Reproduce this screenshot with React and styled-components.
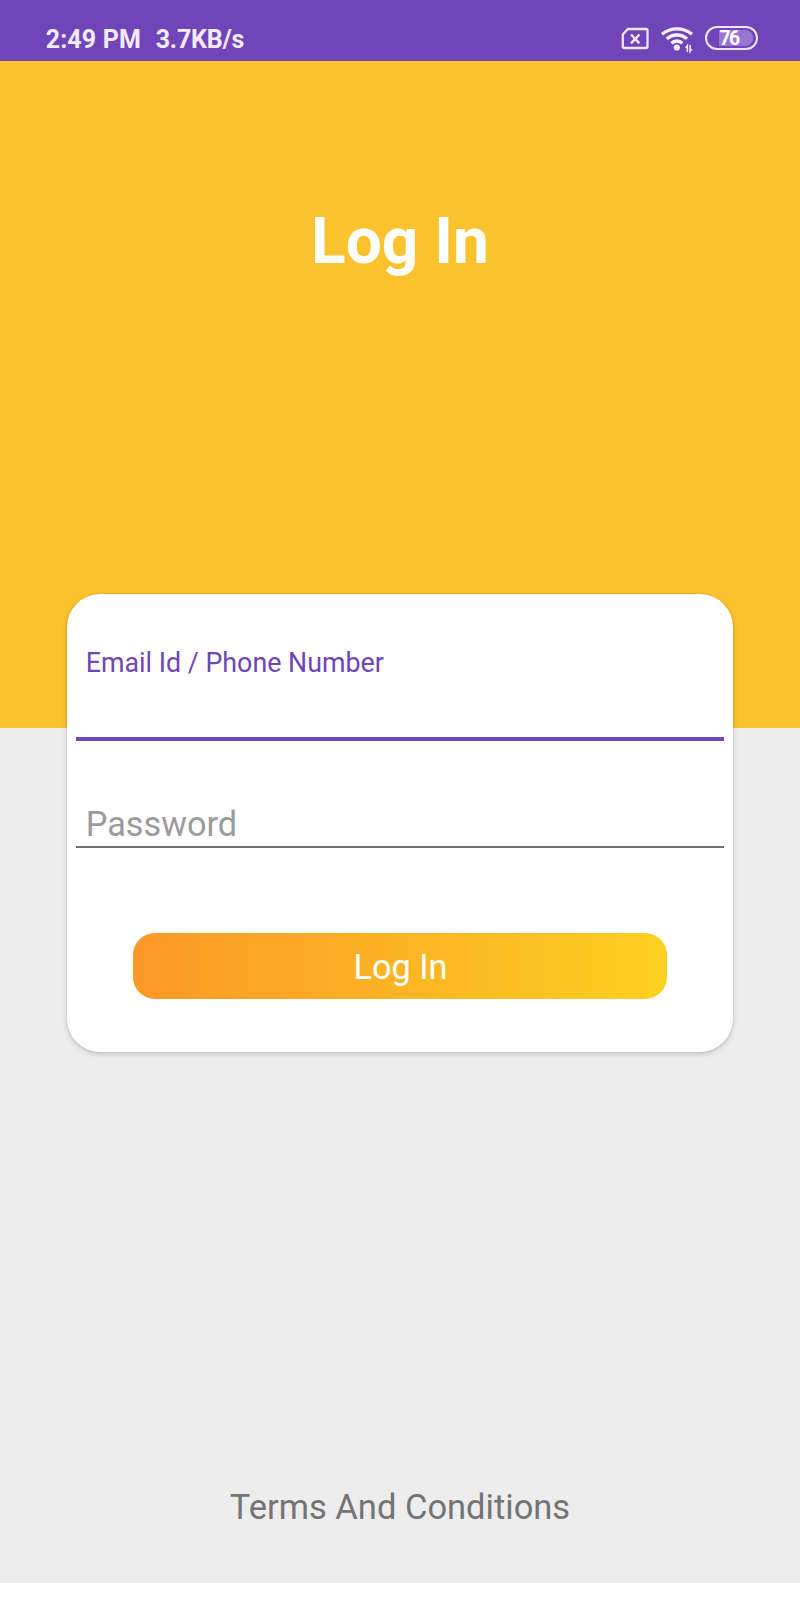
import React from "react";
import styled, { createGlobalStyle } from "styled-components";

const GlobalStyle = createGlobalStyle`
  * { box-sizing: border-box; }
  body {
    margin: 0;
    background: #fff;
    font-family: Roboto, "Liberation Sans", sans-serif;
  }
`;

const Screen = styled.main`
  display: flex;
  flex-direction: column;
  width: 800px;
  height: 1582.5px;
  background: #ededed;
`;

const StatusBar = styled.header`
  display: flex;
  align-items: flex-start;
  justify-content: space-between;
  height: 61px;
  padding: 24px 42.5px 0 45.7px;
  background: #7045b8;
`;

const StatusTexts = styled.div`
  display: flex;
  gap: 15px;
  padding-top: 1px;
`;

const StatusText = styled.span`
  width: ${(p) => p.$width}px;
  font-size: 25px;
  font-weight: 700;
  line-height: 30px;
  letter-spacing: ${(p) => p.$spacing}px;
  color: #f3eafd;
  white-space: nowrap;
`;

const StatusIcons = styled.div`
  display: flex;
  align-items: flex-start;
  padding-top: 2px;
`;

const Icon = styled.svg`
  display: block;
  margin-right: ${(p) => p.$gap || 0}px;
`;

const Battery = styled.div`
  display: flex;
  width: 53px;
  height: 24px;
  padding: 2px 3px 2px 12px;
  border: 2px solid #f0e4ff;
  border-radius: 12px;
`;

const BatteryLevel = styled.div`
  width: 34px;
  height: 16px;
  padding-left: 1px;
  border-radius: 1px 8px 8px 1px;
  background: #9877d4;
  color: #fff;
  font-size: 19.5px;
  font-weight: 700;
  line-height: 17px;
  letter-spacing: -1.6px;
`;

const Hero = styled.section`
  flex: none;
  height: 667px;
  padding-top: 141px;
  background: #fac22c;
`;

const Title = styled.h1`
  margin: 0;
  font-size: 64px;
  font-weight: 700;
  line-height: 80px;
  text-align: center;
  color: #fff;
`;

const Card = styled.form`
  display: flex;
  flex-direction: column;
  flex: none;
  width: 666.6px;
  height: 457.6px;
  margin: -133.7px auto 0;
  padding: 52.7px 9px 0;
  border-radius: 33px;
  background: #fff;
  box-shadow: 0 2px 5px rgba(0, 0, 0, 0.18), 0 0 2px rgba(0, 0, 0, 0.12);
`;

const Field = styled.div`
  flex: none;
  height: ${(p) => p.$height}px;
  margin-bottom: ${(p) => p.$gap}px;
  padding-left: 10px;
  border-bottom: ${(p) => p.$line};
`;

const FieldLabel = styled.label`
  display: block;
  font-size: ${(p) => p.$size}px;
  line-height: ${(p) => p.$leading}px;
  color: ${(p) => p.$color};
  white-space: nowrap;
`;

const LoginButton = styled.button`
  width: 533.4px;
  height: 66.6px;
  margin: 0 auto;
  padding: 2px 0 0 1px;
  border: 0;
  border-radius: 22px;
  background: linear-gradient(90deg, #fb9827, #fdd021);
  color: #fff;
  font-family: inherit;
  font-size: 34.3px;
  line-height: 40px;
`;

const Terms = styled.footer`
  margin-top: auto;
  padding-bottom: 56px;
  font-size: 34.5px;
  line-height: 40px;
  text-align: center;
  color: #747474;
`;

function SimIcon() {
  return (
    <Icon $gap={12} width="29" height="24" viewBox="0 0 29 24" fill="none" stroke="#f0e4ff" strokeWidth="2.3">
      <path d="M8 3H26a1.5 1.5 0 0 1 1.5 1.5v16A1.5 1.5 0 0 1 26 22H4.3a1.5 1.5 0 0 1-1.5-1.5V8.5z" />
      <path d="M11 8.5l8.4 8.8M19.4 8.5l-8.4 8.8" strokeWidth="2.5" />
    </Icon>
  );
}

function WifiIcon() {
  return (
    <Icon $gap={11} width="33" height="28" viewBox="0 0 33 28" fill="none" stroke="#f7efff" strokeWidth="3.3">
      <path d="M1 8.2a24 24 0 0 1 30 0" />
      <path d="M5.8 12.9a15 15 0 0 1 20.2 0" />
      <path d="M10.4 17.2a8 8 0 0 1 11 0" />
      <circle cx="15.8" cy="21.5" r="3.1" fill="#f7efff" stroke="none" />
      <path d="M26.4 26v-6.5l-1.7 2.4M29.1 19v6.5l1.7-2.4" strokeWidth="1.5" />
    </Icon>
  );
}

export default function App() {
  return (
    <>
      <GlobalStyle />
      <Screen>
        <StatusBar>
          <StatusTexts>
            <StatusText $width={95} $spacing={0.15}>2:49 PM</StatusText>
            <StatusText $width={90} $spacing={-0.2}>3.7KB/s</StatusText>
          </StatusTexts>
          <StatusIcons>
            <SimIcon />
            <WifiIcon />
            <Battery>
              <BatteryLevel>76</BatteryLevel>
            </Battery>
          </StatusIcons>
        </StatusBar>
        <Hero>
          <Title>Log In</Title>
        </Hero>
        <Card>
          <Field $height={94.4} $gap={58.6} $line="4px solid #6f46b5">
            <FieldLabel $size={26.8} $leading={33} $color="#6f46b5">
              Email Id / Phone Number
            </FieldLabel>
          </Field>
          <Field $height={48.4} $gap={84.4} $line="2px solid #707070">
            <FieldLabel $size={34.3} $leading={48} $color="#9b9b9b">
              Password
            </FieldLabel>
          </Field>
          <LoginButton type="button">Log In</LoginButton>
        </Card>
        <Terms>Terms And Conditions</Terms>
      </Screen>
    </>
  );
}
